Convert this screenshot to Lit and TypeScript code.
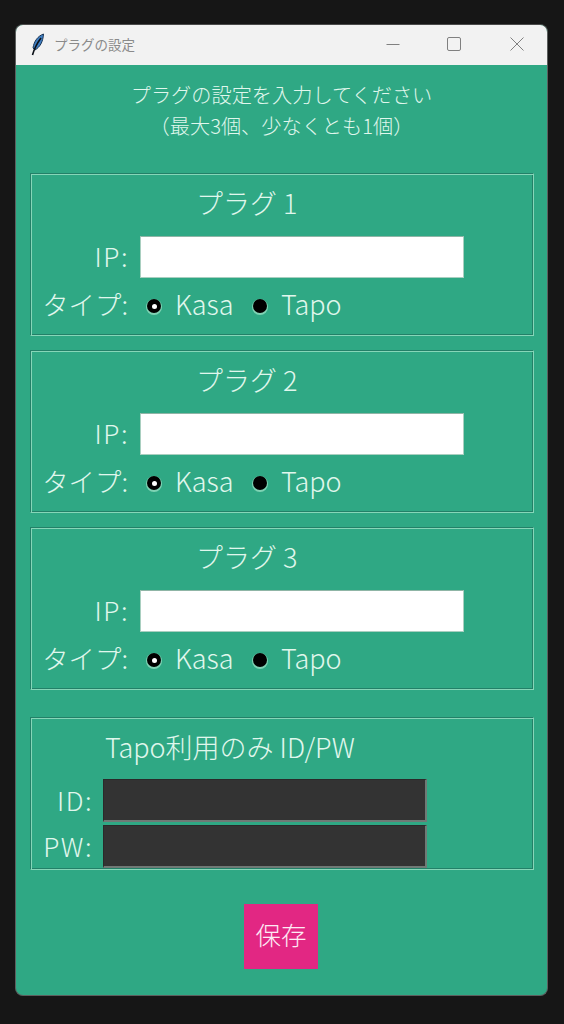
import { LitElement, html, css } from "lit";
import { customElement } from "lit/decorators.js";

@customElement("app-root")
export class AppRoot extends LitElement {
  static styles = css`
    :host {
      display: block;
      width: 564px;
      height: 1024px;
      background: #161616;
      font-family: "Noto Sans CJK JP", "Noto Sans", sans-serif;
      color: #e0f7ed;
      overflow: hidden;
    }
    .page { padding: 24px 16px 0 15px; }
    .window {
      height: 972px;
      box-sizing: border-box;
      border-radius: 8px;
      background: #2fa884;
      border: 1px solid #5c5f5e;
      border-top-color: #4a4a4a;
      overflow: hidden;
      display: flex;
      flex-direction: column;
    }
    .titlebar {
      height: 40px;
      box-sizing: border-box;
      flex: none;
      background: #f2f2f2;
      display: flex;
      align-items: center;
      padding: 0 0 0 12px;
      color: #8a8a8a;
      font-size: 13.5px;
    }
    .feather { width: 20px; height: 24px; margin-right: 6px; flex: none; }
    .ttl { flex: 1; padding-bottom: 3px; }
    .winbtns { display: flex; margin-right: -1px; padding-bottom: 2px; }
    .winbtn { width: 62px; height: 38px; display: flex; align-items: center; justify-content: center; }
    .winbtn svg { width: 16px; height: 16px; stroke: #808080; fill: none; stroke-width: 1; }
    .winbtn.max svg { margin-right: 2px; }
    .body { padding: 0 14px; display: flex; flex-direction: column; }
    .intro {
      text-align: center;
      font-size: 20.2px;
      font-weight: 300;
      line-height: 30px;
      margin-top: 15px;
      margin-bottom: 31px;
      height: 62px;
    }
    .intro div { height: 31px; }
    .group {
      box-sizing: border-box;
      height: 163px;
      margin-bottom: 14px;
      width: 504px;
      border: 1px solid;
      border-color: #238068 #86d6b8 #86d6b8 #238068;
      box-shadow: inset 1px 1px 0 #86d6b8, inset -1px -1px 0 #238068;
      padding: 0 0 0 11px;
    }
    .gtitle {
      font-size: 27px;
      font-weight: 300;
      line-height: 32px;
      height: 32px;
      margin-top: 13px;
      padding-left: 154px;
      white-space: nowrap;
    }
    .row { display: flex; align-items: center; }
    .row.ip { margin-top: 17px; height: 42px; }
    .row.type { margin-top: 6px; height: 42px; }
    .lbl {
      width: 86px;
      flex: none;
      text-align: right;
      font-size: 26.4px;
      font-weight: 300;
      white-space: nowrap;
      line-height: 32px;
      padding-bottom: 2px;
    }
    .lbl.latin { letter-spacing: 1.5px; width: 87px; margin-right: -1px; }
    .lbl.latin.lbl2 { width: 51px; }
    .input {
      margin-left: 12px;
      width: 324px;
      height: 42px;
      box-sizing: border-box;
      background: #fff;
      border: 1px solid #a9cfc0;
      border-top-color: #8fb5a6;
      flex: none;
    }
    .radio {
      margin-left: 19px;
      margin-top: 2px;
      width: 14px;
      height: 14px;
      border-radius: 50%;
      background: #000;
      box-shadow: 0 1px 0 1px #7fd3b4;
      display: flex;
      align-items: center;
      justify-content: center;
      flex: none;
    }
    .radio.on::after {
      content: "";
      width: 5px;
      height: 5px;
      border-radius: 50%;
      background: #fff;
    }
    .rlabel {
      font-size: 27px;
      font-weight: 300;
      margin-left: 14px;
      line-height: 32px;
      width: 59px;
      white-space: nowrap;
      padding-bottom: 2px;
    }
    .tapo-group { height: 153px; margin-top: 13px; margin-bottom: 0; }
    .tapo-title { padding-left: 63px; margin-top: 13px; }
    .dark {
      margin-left: 11px;
      width: 324px;
      height: 43px;
      box-sizing: border-box;
      background: #333333;
      border: 1px solid #2a2a2a;
      border-bottom: 2px solid #6f7a76;
      border-right: 2px solid #6f7a76;
      flex: none;
    }
    .row.id { margin-top: 16px; height: 43px; }
    .row.pw { margin-top: 3px; height: 43px; }
    .save-wrap { display: flex; justify-content: flex-start; padding-left: 214px; margin-top: 34px; }
    .save {
      width: 74px;
      height: 65px;
      background: #e22783;
      color: #fdeaf3;
      font-family: inherit;
      font-size: 25.5px;
      font-weight: 300;
      border: none;
      padding: 0 0 6px;
    }
  `;

  private plug(n: number) {
    return html`<section class="group">
      <div class="gtitle">プラグ ${n}</div>
      <div class="row ip"><span class="lbl latin">IP:</span><div class="input"></div></div>
      <div class="row type">
        <span class="lbl">タイプ:</span>
        <span class="radio on"></span><span class="rlabel">Kasa</span>
        <span class="radio off"></span><span class="rlabel">Tapo</span>
      </div>
    </section>`;
  }

  render() {
    return html`<div class="page"><div class="window">
      <header class="titlebar">
        <svg class="feather" viewBox="0 0 20 24">
          <path d="M15.5 1 C10 3 6 8 5 15 L7 17 C12 14 15 9 15.5 1Z" fill="#3f7fc4" stroke="#1a3555" stroke-width="1"/>
          <path d="M13 5 C10 9 7 13 4.5 22" fill="none" stroke="#0c1118" stroke-width="1.6"/>
        </svg>
        <span class="ttl">プラグの設定</span>
        <div class="winbtns">
          <span class="winbtn"><svg viewBox="0 0 16 16"><path d="M1.5 8.5H14.5"/></svg></span>
          <span class="winbtn max"><svg viewBox="0 0 16 16"><rect x="1.5" y="1.5" width="13" height="13" rx="1.5"/></svg></span>
          <span class="winbtn"><svg viewBox="0 0 16 16"><path d="M1.5 1.5L14.5 14.5M14.5 1.5L1.5 14.5"/></svg></span>
        </div>
      </header>
      <main class="body">
        <div class="intro"><div>プラグの設定を入力してください</div><div>（最大3個、少なくとも1個）</div></div>
        ${[1, 2, 3].map((n) => this.plug(n))}
        <section class="group tapo-group">
          <div class="gtitle tapo-title">Tapo利用のみ ID/PW</div>
          <div class="row id"><span class="lbl lbl2 latin">ID:</span><div class="dark"></div></div>
          <div class="row pw"><span class="lbl lbl2 latin">PW:</span><div class="dark"></div></div>
        </section>
        <div class="save-wrap"><button class="save">保存</button></div>
      </main>
    </div></div>`;
  }
}
